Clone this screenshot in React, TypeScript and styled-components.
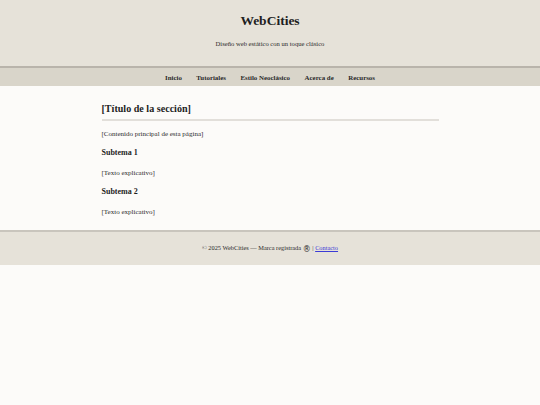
import React from "react";
import styled, { createGlobalStyle } from "styled-components";

const GlobalStyle = createGlobalStyle`
    html, body {
        margin: 0;
        padding: 0;
        background: #fcfbf9;
        color: #222;
        font-family: "Liberation Serif", "Times New Roman", serif;
    }
`;

const Masthead = styled.header`
    background: #e6e2d9;
    padding: 13px 0 18px;
    text-align: center;
`;

const SiteTitle = styled.h1`
    margin: 0;
    font-size: 13.5px;
    line-height: 16px;
    font-weight: bold;
    color: #1e1e1e;
`;

const Tagline = styled.p`
    margin: 10px 0 0;
    font-size: 6.6px;
    line-height: 9px;
    color: #2a2a2a;
`;

const NavBar = styled.nav`
    background: #d9d5ca;
    border-top: 2px solid #b9b4ab;
    height: 18px;
    display: flex;
    justify-content: center;
    align-items: center;
    gap: 14.5px;
`;

const NavLink = styled.a`
    font-size: 6.9px;
    font-weight: bold;
    color: #2a2a2a;
    text-decoration: none;
    cursor: pointer;
`;

const Main = styled.main`
    width: 337px;
    margin: 0 auto;
    padding: 15.5px 0 13.5px;
`;

const SectionTitle = styled.h2`
    margin: 0;
    font-size: 10.1px;
    line-height: 13px;
    padding-bottom: 4px;
    border-bottom: 2px solid #e2dfda;
    color: #1e1e1e;
`;

const Paragraph = styled.p<{ $gap: number }>`
    margin: ${({ $gap }) => $gap}px 0 0;
    font-size: 7px;
    line-height: 9px;
    color: #2a2a2a;
`;

const Subheading = styled.h3`
    margin: 9.5px 0 0;
    font-size: 8px;
    line-height: 10px;
    font-weight: bold;
    color: #1e1e1e;
`;

const Footer = styled.footer`
    background: #e6e2d9;
    border-top: 2px solid #c9c5bd;
    height: 33px;
    display: flex;
    justify-content: center;
    align-items: center;
    font-size: 6.35px;
    color: #2a2a2a;
`;

// the registered mark sits a little larger than the footer text, on its baseline
const Registered = styled.span`
    font-family: "DejaVu Sans", sans-serif;
    font-size: 8px;
    line-height: 1;
    vertical-align: -1.5px;
`;

const FooterLink = styled.a`
    color: #3b3bd6;
    text-decoration: underline;
`;

const navItems = ["Inicio", "Tutoriales", "Estilo Neoclásico", "Acerca de", "Recursos"];

export default function App() {
    return (
        <>
            <GlobalStyle />
            <Masthead>
                <SiteTitle>WebCities</SiteTitle>
                <Tagline>Diseño web estático con un toque clásico</Tagline>
            </Masthead>
            <NavBar>
                {navItems.map((item) => (
                    <NavLink key={item}>{item}</NavLink>
                ))}
            </NavBar>
            <Main>
                <SectionTitle>[Título de la sección]</SectionTitle>
                <Paragraph $gap={9}>[Contenido principal de esta página]</Paragraph>
                <Subheading>Subtema 1</Subheading>
                <Paragraph $gap={10.5}>[Texto explicativo]</Paragraph>
                <Subheading>Subtema 2</Subheading>
                <Paragraph $gap={10.5}>[Texto explicativo]</Paragraph>
            </Main>
            <Footer>
                <span>
                    © 2025 WebCities — Marca registrada <Registered>®</Registered> |{" "}
                    <FooterLink>Contacto</FooterLink>
                </span>
            </Footer>
        </>
    );
}
